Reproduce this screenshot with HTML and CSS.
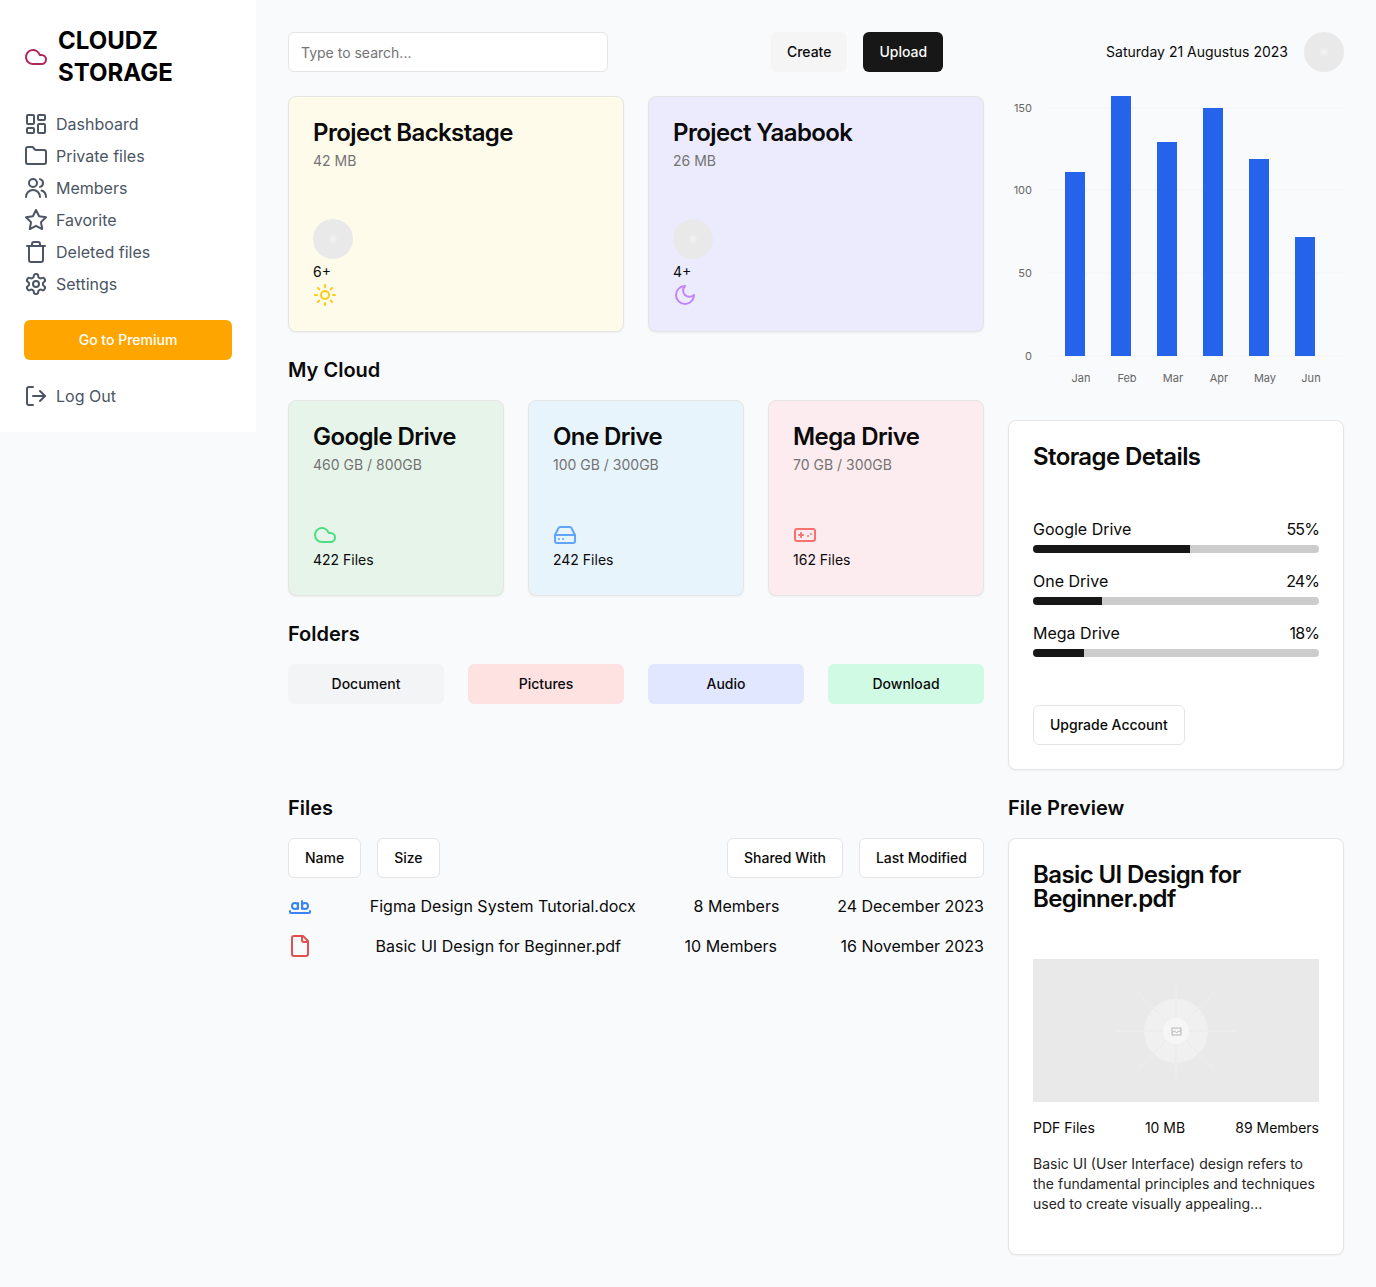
FILE: index.html
```html
<!DOCTYPE html>
<html lang="en">
<head>
<meta charset="utf-8">
<title>Cloudz Storage</title>
<link rel="stylesheet" href="styles.css">
</head>
<body>
<div class="app">
  <aside class="sidebar">
    <div class="brand">
      <svg class="icon brand-icon" viewBox="0 0 24 24"><path d="M17.5 19H9a7 7 0 1 1 6.71-9h1.79a4.5 4.5 0 1 1 0 9Z"/></svg>
      <h1 class="brand-name">CLOUDZ STORAGE</h1>
    </div>
    <nav class="nav">
      <a class="nav-item"><svg class="icon" viewBox="0 0 24 24"><rect x="3" y="3" width="7" height="9" rx="1"/><rect x="14" y="3" width="7" height="5" rx="1"/><rect x="14" y="12" width="7" height="9" rx="1"/><rect x="3" y="16" width="7" height="5" rx="1"/></svg>Dashboard</a>
      <a class="nav-item"><svg class="icon" viewBox="0 0 24 24"><path d="M20 20a2 2 0 0 0 2-2V8a2 2 0 0 0-2-2h-7.9a2 2 0 0 1-1.69-.9L9.6 3.9A2 2 0 0 0 7.93 3H4a2 2 0 0 0-2 2v13a2 2 0 0 0 2 2Z"/></svg>Private files</a>
      <a class="nav-item"><svg class="icon" viewBox="0 0 24 24"><circle cx="9" cy="7" r="4"/><path d="M2 21c0-3.9 3.1-7 7-7s7 3.1 7 7"/><path d="M16 3.13a4 4 0 0 1 0 7.75"/><path d="M22 21c0-3-1.8-5.6-4.5-6.5"/></svg>Members</a>
      <a class="nav-item"><svg class="icon" viewBox="0 0 24 24"><path d="M12 2l3.09 6.26L22 9.27l-5 4.87 1.18 6.88L12 17.77l-6.18 3.25L7 14.14 2 9.27l6.91-1.01z"/></svg>Favorite</a>
      <a class="nav-item"><svg class="icon" viewBox="0 0 24 24"><path d="M3 6h18"/><path d="M8 6V4a2 2 0 0 1 2-2h4a2 2 0 0 1 2 2v2"/><path d="M5 6h14v14a2 2 0 0 1-2 2H7a2 2 0 0 1-2-2z"/></svg>Deleted files</a>
      <a class="nav-item"><svg class="icon" viewBox="0 0 24 24"><path d="M12.22 2h-.44a2 2 0 0 0-2 2v.18a2 2 0 0 1-1 1.73l-.43.25a2 2 0 0 1-2 0l-.15-.08a2 2 0 0 0-2.73.73l-.22.38a2 2 0 0 0 .73 2.73l.15.1a2 2 0 0 1 1 1.72v.51a2 2 0 0 1-1 1.74l-.15.09a2 2 0 0 0-.73 2.73l.22.38a2 2 0 0 0 2.73.73l.15-.08a2 2 0 0 1 2 0l.43.25a2 2 0 0 1 1 1.73V20a2 2 0 0 0 2 2h.44a2 2 0 0 0 2-2v-.18a2 2 0 0 1 1-1.73l.43-.25a2 2 0 0 1 2 0l.15.08a2 2 0 0 0 2.73-.73l.22-.39a2 2 0 0 0-.73-2.73l-.15-.08a2 2 0 0 1-1-1.74v-.5a2 2 0 0 1 1-1.74l.15-.09a2 2 0 0 0 .73-2.73l-.22-.38a2 2 0 0 0-2.73-.73l-.15.08a2 2 0 0 1-2 0l-.43-.25a2 2 0 0 1-1-1.73V4a2 2 0 0 0-2-2z"/><circle cx="12" cy="12" r="3"/></svg>Settings</a>
    </nav>
    <button class="btn btn-premium">Go to Premium</button>
    <a class="nav-item logout"><svg class="icon" viewBox="0 0 24 24"><path d="M9 21H5a2 2 0 0 1-2-2V5a2 2 0 0 1 2-2h4"/><path d="M16 17l5-5-5-5"/><path d="M21 12H9"/></svg>Log Out</a>
  </aside>

  <main class="main">
    <header class="topbar">
      <input class="search" type="text" placeholder="Type to search...">
      <div class="actions">
        <button class="btn btn-muted">Create</button>
        <button class="btn btn-dark">Upload</button>
      </div>
      <div class="user">
        <span class="date">Saturday 21 Augustus 2023</span>
        <span class="avatar"></span>
      </div>
    </header>

    <div class="grid">
      <div class="col">
        <section class="row-2">
          <article class="card tint-yellow">
            <h3 class="card-title">Project Backstage</h3>
            <p class="card-sub">42 MB</p>
            <span class="avatar avatar-card"></span>
            <p class="count">6+</p>
            <svg class="icon c-sun" viewBox="0 0 24 24"><circle cx="12" cy="12" r="4"/><path d="M12 2v2"/><path d="M12 20v2"/><path d="m4.93 4.93 1.41 1.41"/><path d="m17.66 17.66 1.41 1.41"/><path d="M2 12h2"/><path d="M20 12h2"/><path d="m6.34 17.66-1.41 1.41"/><path d="m19.07 4.93-1.41 1.41"/></svg>
          </article>
          <article class="card tint-violet">
            <h3 class="card-title">Project Yaabook</h3>
            <p class="card-sub">26 MB</p>
            <span class="avatar avatar-card"></span>
            <p class="count">4+</p>
            <svg class="icon c-moon" viewBox="0 0 24 24"><path d="M12 3a6 6 0 0 0 9 9 9 9 0 1 1-9-9Z"/></svg>
          </article>
        </section>

        <h2 class="section-title title-gap">My Cloud</h2>
        <section class="row-3">
          <article class="card tint-green">
            <h3 class="card-title">Google Drive</h3>
            <p class="card-sub">460 GB / 800GB</p>
            <svg class="icon c-green cloud-icon" viewBox="0 0 24 24"><path d="M17.5 19H9a7 7 0 1 1 6.71-9h1.79a4.5 4.5 0 1 1 0 9Z"/></svg>
            <p class="count">422 Files</p>
          </article>
          <article class="card tint-blue">
            <h3 class="card-title">One Drive</h3>
            <p class="card-sub">100 GB / 300GB</p>
            <svg class="icon c-blue cloud-icon" viewBox="0 0 24 24"><path d="M22 12H2"/><path d="M5.45 5.11 2 12v6a2 2 0 0 0 2 2h16a2 2 0 0 0 2-2v-6l-3.45-6.89A2 2 0 0 0 16.76 4H7.24a2 2 0 0 0-1.79 1.11z"/><path d="M6 16h.01"/><path d="M10 16h.01"/></svg>
            <p class="count">242 Files</p>
          </article>
          <article class="card tint-pink">
            <h3 class="card-title">Mega Drive</h3>
            <p class="card-sub">70 GB / 300GB</p>
            <svg class="icon c-red cloud-icon" viewBox="0 0 24 24"><path d="M6 12h4"/><path d="M8 10v4"/><path d="M15 13h.01"/><path d="M18 11h.01"/><rect x="2" y="6" width="20" height="12" rx="2"/></svg>
            <p class="count">162 Files</p>
          </article>
        </section>

        <h2 class="section-title title-gap">Folders</h2>
        <section class="row-4">
          <button class="btn folder f-gray">Document</button>
          <button class="btn folder f-red">Pictures</button>
          <button class="btn folder f-indigo">Audio</button>
          <button class="btn folder f-green">Download</button>
        </section>
      </div>

      <div class="col">
        <figure class="chart">
          <svg class="chart-svg" viewBox="0 0 336 300" width="336" height="300">
            <g class="grid-lines">
              <line x1="40" x2="336" y1="12" y2="12"/>
              <line x1="40" x2="336" y1="94" y2="94"/>
              <line x1="40" x2="336" y1="177" y2="177"/>
              <line x1="40" x2="336" y1="260" y2="260"/>
            </g>
            <g class="bars">
              <rect x="57" y="76" width="20" height="184"/>
              <rect x="103" y="0" width="20" height="260"/>
              <rect x="149" y="46" width="20" height="214"/>
              <rect x="195" y="12" width="20" height="248"/>
              <rect x="241" y="63" width="20" height="197"/>
              <rect x="287" y="141" width="20" height="119"/>
            </g>
            <g class="y-labels">
              <text x="24" y="16">150</text>
              <text x="24" y="98">100</text>
              <text x="24" y="181">50</text>
              <text x="24" y="264">0</text>
            </g>
            <g class="x-labels">
              <text x="73" y="286">Jan</text>
              <text x="119" y="286">Feb</text>
              <text x="165" y="286">Mar</text>
              <text x="211" y="286">Apr</text>
              <text x="257" y="286">May</text>
              <text x="303" y="286">Jun</text>
            </g>
          </svg>
        </figure>

        <article class="card card-white storage">
          <h3 class="card-title">Storage Details</h3>
          <div class="meters">
            <div class="meter">
              <div class="meter-label"><span>Google Drive</span><span class="pct">55%</span></div>
              <div class="track"><div class="fill" style="width:55%"></div></div>
            </div>
            <div class="meter">
              <div class="meter-label"><span>One Drive</span><span class="pct">24%</span></div>
              <div class="track"><div class="fill" style="width:24%"></div></div>
            </div>
            <div class="meter">
              <div class="meter-label"><span>Mega Drive</span><span class="pct">18%</span></div>
              <div class="track"><div class="fill" style="width:18%"></div></div>
            </div>
          </div>
          <button class="btn btn-outline">Upgrade Account</button>
        </article>
      </div>

      <div class="col">
        <h2 class="section-title">Files</h2>
        <div class="file-tools">
          <div class="tool-group">
            <button class="btn btn-outline">Name</button>
            <button class="btn btn-outline">Size</button>
          </div>
          <div class="tool-group">
            <button class="btn btn-outline">Shared With</button>
            <button class="btn btn-outline">Last Modified</button>
          </div>
        </div>
        <div class="file-list">
          <div class="file-row">
            <svg class="icon c-word" viewBox="0 0 24 24"><circle cx="7" cy="12" r="3"/><path d="M10 9v6"/><circle cx="17" cy="12" r="3"/><path d="M14 7v8"/><path d="M22 17v1c0 .5-.5 1-1 1H3c-.5 0-1-.5-1-1v-1"/></svg>
            <span>Figma Design System Tutorial.docx</span>
            <span>8 Members</span>
            <span>24 December 2023</span>
          </div>
          <div class="file-row">
            <svg class="icon c-pdf" viewBox="0 0 24 24"><path d="M15 2H6a2 2 0 0 0-2 2v16a2 2 0 0 0 2 2h12a2 2 0 0 0 2-2V7Z"/><path d="M14 2v4a2 2 0 0 0 2 2h4"/></svg>
            <span>Basic UI Design for Beginner.pdf</span>
            <span>10 Members</span>
            <span>16 November 2023</span>
          </div>
        </div>
      </div>

      <div class="col">
        <h2 class="section-title">File Preview</h2>
        <article class="card card-white preview">
          <h3 class="card-title">Basic UI Design for Beginner.pdf</h3>
          <div class="thumb">
            <svg class="thumb-svg" viewBox="0 0 150 120" width="150" height="120">
              <g class="thumb-rays">
                <line x1="37" y1="22" x2="113" y2="98"/>
                <line x1="113" y1="22" x2="37" y2="98"/>
                <line x1="75" y1="15" x2="75" y2="105"/>
                <line x1="15" y1="60" x2="135" y2="60"/>
              </g>
              <circle class="thumb-outer" cx="75" cy="60" r="32"/>
              <g class="thumb-inner-rays">
                <line x1="75" y1="28" x2="75" y2="92"/>
                <line x1="43" y1="60" x2="107" y2="60"/>
                <line x1="52" y1="37" x2="98" y2="83"/>
                <line x1="98" y1="37" x2="52" y2="83"/>
              </g>
              <circle class="thumb-core" cx="75" cy="60" r="13"/>
              <rect class="thumb-glyph" x="71" y="57" width="9" height="7"/>
              <path class="thumb-glyph" d="M71 61.5l2.5-1.5 2 1.5 4.5-2"/>
            </svg>
          </div>
          <div class="meta"><span>PDF Files</span><span>10 MB</span><span>89 Members</span></div>
          <p class="desc">Basic UI (User Interface) design refers to the fundamental principles and techniques used to create visually appealing...</p>
        </article>
      </div>
    </div>
  </main>
</div>
</body>
</html>
```
FILE: styles.css
```css
* { box-sizing: border-box; }
html, body { margin: 0; padding: 0; }
body {
  background: #f9fafb;
  color: #0a0a0a;
  font-family: "Inter", "Liberation Sans", sans-serif;
  font-size: 16px;
  line-height: 24px;
}
h1, h2, h3, p, figure { margin: 0; }
button { font-family: inherit; cursor: pointer; }

.app { display: flex; align-items: flex-start; min-height: 1287px; }

/* Sidebar */
.sidebar {
  width: 256px;
  flex: none;
  background: #fff;
  padding: 24px;
  display: flex;
  flex-direction: column;
}
.brand { display: flex; align-items: center; gap: 10px; margin-bottom: 23px; }
.brand-name { font-size: 24px; line-height: 32px; font-weight: 700; color: #000; width: 130px; padding-top: 1px; }
.icon {
  width: 24px; height: 24px; flex: none;
  fill: none; stroke: currentColor; stroke-width: 2;
  stroke-linecap: round; stroke-linejoin: round;
  display: block;
}
.brand-icon { color: #b0255c; }
.nav { display: flex; flex-direction: column; gap: 8px; }
.nav-item { display: flex; align-items: center; gap: 8px; color: #4b5563; height: 24px; }
.nav-item .icon { color: #4b5563; }
.logout { margin-top: 24px; }

/* Buttons */
.btn {
  height: 40px; border: 0; border-radius: 6px;
  font-size: 14px; font-weight: 500; line-height: 20px;
  padding: 0 16px; color: #0a0a0a;
}
.btn-premium { background: #ffa500; color: #fff; width: 100%; margin-top: 24px; }
.btn-muted { background: #f5f5f5; }
.btn-dark { background: #171717; color: #fafafa; }
.btn-outline { background: #fff; border: 1px solid #e5e5e5; }

/* Main */
.main { flex: 1; padding: 32px; min-width: 0; }
.topbar { display: flex; justify-content: space-between; align-items: center; height: 40px; margin-bottom: 24px; }
.search {
  width: 320px; height: 40px; border: 1px solid #e5e5e5; border-radius: 6px;
  background: #fff; padding: 0 12px; font-family: inherit; font-size: 14px; outline: none;
}
.search::placeholder { color: #737373; }
.actions { display: flex; gap: 16px; }
.user { display: flex; align-items: center; gap: 16px; }
.date { font-size: 14px; line-height: 20px; }
.avatar {
  width: 40px; height: 40px; border-radius: 50%; display: block; flex: none;
  background: radial-gradient(circle, #f4f4f4 0, #e9e9e9 5px, #e9e9e9 100%);
}
.avatar-card { margin-top: 24px; }

.grid { display: grid; grid-template-columns: 696px 336px; gap: 24px; }
.col { min-width: 0; }

.card {
  border: 1px solid #e5e5e5; border-radius: 8px; padding: 24px;
  box-shadow: 0 1px 2px rgba(0,0,0,.05);
  display: flex; flex-direction: column; align-items: flex-start;
}
.card-white { background: #fff; }
.card-title { font-size: 24px; line-height: 24px; font-weight: 600; letter-spacing: -0.6px; color: #0a0a0a; }
.card-sub { font-size: 14px; line-height: 20px; color: #737373; margin-top: 6px; margin-bottom: 24px; }
.count { font-size: 14px; line-height: 20px; }

.tint-yellow { background: #fffbeb; }
.tint-violet { background: #ecebfd; }
.tint-green { background: #e6f4ea; }
.tint-blue { background: #e8f4fb; }
.tint-pink { background: #fdecef; }

.count + .icon { margin-top: 1px; }
.avatar-card + .count { margin-top: 3px; }
.c-sun { color: #facc15; }
.c-moon { color: #c084fc; }
.c-green { color: #4ade80; }
.c-blue { color: #60a5fa; }
.c-red { color: #f87171; }
.c-word { color: #3b82f6; }
.c-pdf { color: #dc2626; opacity: .8; }
.cloud-icon { margin-top: 24px; margin-bottom: 3px; }

.row-2 { display: grid; grid-template-columns: repeat(2, 1fr); gap: 24px; }
.row-3 { display: grid; grid-template-columns: repeat(3, 1fr); gap: 24px; }
.row-3 .card { padding-bottom: 25px; }
.row-4 { display: grid; grid-template-columns: repeat(4, 1fr); gap: 24px; }

.section-title { font-size: 20px; line-height: 28px; font-weight: 600; color: #0a0a0a; margin-bottom: 16px; }
.title-gap { margin-top: 24px; }

.folder { width: 100%; }
.f-gray { background: #f3f4f6; }
.f-red { background: #fee2e2; }
.f-indigo { background: #e0e7ff; }
.f-green { background: #d1fae5; }

/* Chart */
.chart { height: 300px; margin-bottom: 24px; }
.chart-svg { display: block; }
.grid-lines line { stroke: #f3f4f6; stroke-width: 1; }
.bars rect { fill: #2563eb; }
.y-labels text { font-size: 11px; fill: #666; text-anchor: end; }
.x-labels text { font-size: 11px; fill: #666; text-anchor: middle; }

/* Storage */
.meters { width: 100%; margin-top: 48px; display: flex; flex-direction: column; gap: 16px; margin-bottom: 48px; }
.meter-label { display: flex; justify-content: space-between; margin-bottom: 4px; }
.pct { letter-spacing: -0.9px; }
.track { height: 8px; background: #ccc; border-radius: 4px; overflow: hidden; }
.fill { height: 100%; background: #171717; }

/* Files */
.file-tools { display: flex; justify-content: space-between; margin-bottom: 16px; }
.tool-group { display: flex; gap: 16px; }
.file-list { display: flex; flex-direction: column; gap: 16px; }
.file-row { display: flex; justify-content: space-between; align-items: center; color: #0a0a0a; }

/* Preview */
.thumb {
  width: 100%; height: 143px; margin-top: 48px; background: #e9e9e9;
  display: flex; align-items: center; justify-content: center; overflow: hidden;
}
.thumb-svg { flex: none; }
.thumb-rays line { stroke: #efefef; stroke-width: 1; }
.thumb-outer { fill: #f0f0f0; }
.thumb-inner-rays line { stroke: #e9e9e9; stroke-width: 1; }
.thumb-core { fill: #f6f6f6; }
.thumb-glyph { fill: none; stroke: #a8a8a8; stroke-width: .8; }
.meta { width: 100%; display: flex; justify-content: space-between; font-size: 14px; line-height: 20px; margin-top: 16px; }
.desc { font-size: 14px; line-height: 20px; margin-top: 16px; margin-bottom: 16px; color: #262626; }
```
